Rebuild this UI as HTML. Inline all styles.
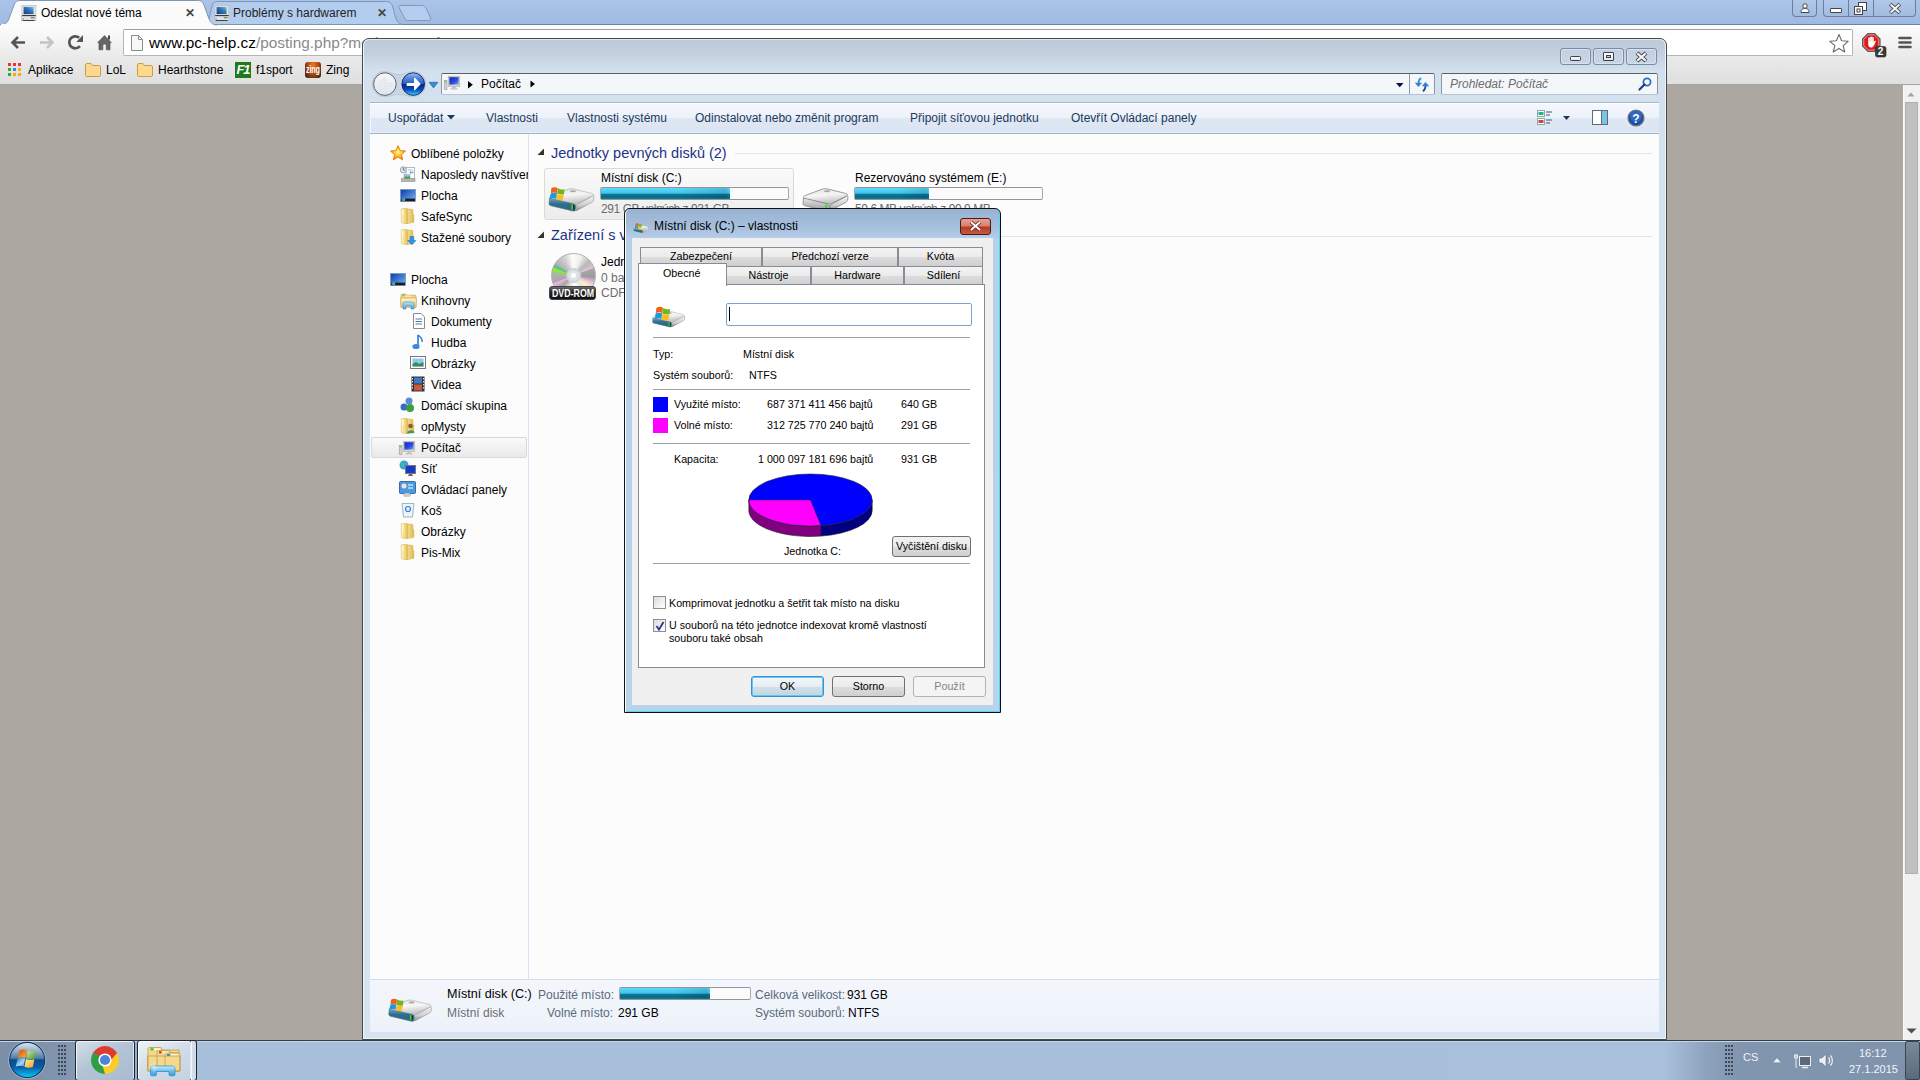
<!DOCTYPE html>
<html><head><meta charset="utf-8">
<style>
*{box-sizing:border-box;margin:0;padding:0}
html,body{width:1920px;height:1080px;overflow:hidden;background:#aca8a1;font-family:"Liberation Sans",sans-serif;font-size:12px;color:#000}
.a{position:absolute}
.t{position:absolute;white-space:nowrap;line-height:1}
svg{position:absolute;overflow:visible}
/* chrome */
#tabstrip{left:0;top:0;width:1920px;height:25px;background:linear-gradient(#abc5e9,#9fb8e0)}
#toolbar{left:0;top:24px;width:1920px;height:60px;background:linear-gradient(#fdfdfd 0,#f5f5f5 14px,#e9e9e9 33px,#dfdfdf 59px);border-top:1px solid #6d83a7;box-shadow:inset 0 1px 0 #fff}
#page{left:0;top:84px;width:1903px;height:956px;background:#aca8a1;border-top:1px solid #a4a4a4}
#vscroll{left:1903px;top:84px;width:17px;height:956px;background:#f1f1f1;border-top:1px solid #a4a4a4;box-shadow:inset 1px 0 0 #fafafa}
.cbtn{background:linear-gradient(#b0c8ea,#a2bbdf);border:1px solid #6d7f99;border-top:none}
.bm{top:64px;font-size:12px;color:#000}
/* explorer */
#exw{left:362px;top:38px;width:1305px;height:1002px;border:1px solid #484848;box-shadow:inset 1px 0 0 #eef4fb,inset -1px 0 0 #eef4fb,inset 0 1px 0 #e4eaf4,inset 0 -1px 0 #eef4fb;border-radius:7px 7px 0 0;background:linear-gradient(#bccad9 0,#c2cfdd 14px,#d3e0ee 32px,#d6e3f1 100%)}
.ctl{top:48px;width:31px;height:17px;border:1px solid #7b8ba4;border-radius:3px;background:linear-gradient(#c2d0e0,#c8d5e4);box-shadow:inset 0 0 0 1px #d8e2ee}
#cmd{left:370px;top:102px;width:1289px;height:32px;background:linear-gradient(#f5f8fd 0,#ecf2fa 48%,#dee7f3 52%,#dbe5f3 100%);border-top:1px solid #a7b8cd;border-bottom:1px solid #a0b1c8;box-shadow:inset 0 1px 0 #fdfeff,inset 1px 0 0 #f2f7fc,inset 0 -1px 0 #e8eff8}
#nav{left:370px;top:134px;width:159px;height:845px;background:#fcfcfc;border-right:1px solid #d8e4f3}
#content{left:529px;top:134px;width:1130px;height:845px;background:#fcfcfc}
#details{left:370px;top:979px;width:1289px;height:53px;background:linear-gradient(#f3f6fc,#edf2fa);border-top:1px solid #d3dde9}
.nv{font-size:12px;color:#000}
.grp{font-size:14.5px;color:#1e3287}
.gray{color:#6d6d6d}
.bar{border:1px solid #959595;border-left-color:#a8a8a8;border-right-color:#a8a8a8;background:#fbfbfb;border-radius:2px}
.fill{background:linear-gradient(90deg,rgba(0,0,0,0) 60%,rgba(0,20,40,0.15) 97%,rgba(0,0,0,0) 100%),linear-gradient(#5cdafa 0,#48c6ec 40%,#36aed8 50%,#0b7a96 54%,#086a88 85%,#0a88a8 100%)}
/* dialog */
#dlg{left:624px;top:208px;width:377px;height:505px;border:1px solid #111;box-shadow:inset 1px 0 0 #fff,inset -1px -1px 0 #4fd8fd;border-radius:6px 6px 0 0;background:linear-gradient(#98b2d2 0,#a8c1de 20px,#b7cfe9 30px,#bad2ea 100%)}
.d{font-size:10.7px}
.tab{height:19px;border:1px solid #898c95;border-bottom:none;background:linear-gradient(#f3f3f3 0,#ebebeb 50%,#dddddd 51%,#cfcfcf 100%);text-align:center;font-size:10.7px;line-height:17px}
.btn{border:1px solid #707070;border-radius:3px;background:linear-gradient(#f2f2f2 0,#ebebeb 50%,#dddddd 51%,#cfcfcf 100%);text-align:center;font-size:10.7px;line-height:18px}
.sep{height:1px;background:#a0a0a0;left:653px;width:317px}
/* taskbar */
#task{left:0;top:1040px;width:1920px;height:40px;box-shadow:inset 0 1px 0 #c6d6ea;background:linear-gradient(90deg,#7b8fa9 0,#8094ae 60px,#9cb3cf 150px,#a7bfdb 200px,#a8c0db 1665px,#8ea3bd 1705px,#8195af 1740px,#7f93ad 100%);border-top:1px solid #343e4a}
</style></head><body>
<svg width="0" height="0" style="position:absolute">
<defs>
 <linearGradient id="hdTop" x1="0" y1="0" x2="0.3" y2="1"><stop offset="0" stop-color="#dcdcdc"/><stop offset="0.5" stop-color="#f6f6f6"/><stop offset="1" stop-color="#c4c4c4"/></linearGradient>
 <linearGradient id="hdFront" x1="0" y1="0" x2="0" y2="1"><stop offset="0" stop-color="#7ea4bd"/><stop offset="0.45" stop-color="#2f6d92"/><stop offset="1" stop-color="#2a6a7a"/></linearGradient>
 <linearGradient id="hdRight" x1="0" y1="0" x2="0" y2="1"><stop offset="0" stop-color="#f4f4f4"/><stop offset="0.6" stop-color="#d0d0d0"/><stop offset="1" stop-color="#8c8c8c"/></linearGradient>
 <linearGradient id="hdFrontS" x1="0" y1="0" x2="0" y2="1"><stop offset="0" stop-color="#e6e6e6"/><stop offset="1" stop-color="#9a9a9a"/></linearGradient>
 <symbol id="hddwin" viewBox="0 0 56 40">
  <path d="M5,27 L5.5,22 L29,27.5 L32.5,28.5 L49.5,19.5 L49.8,23.5 C49.6,25 48.8,25.6 47.5,26.3 L33,34.6 C31.6,35.4 30.2,35.5 28.6,35.1 L7.5,30.2 C5.8,29.8 5,29 5,27 Z" fill="#6d7d86" opacity="0.55"/>
  <path d="M5.5,22 C5.2,20.8 6,20 7.8,19.3 L24,13.2 C26,12.5 28,12.5 30,13.1 L47.5,17.4 C49.6,17.9 50.2,19 48.6,20 L33.8,27.3 C32.2,28 30.6,28.1 29,27.7 L7.2,23 C6.3,22.8 5.7,22.6 5.5,22 Z" fill="url(#hdTop)" stroke="#a8a8a8" stroke-width="0.6"/>
  <path d="M5.5,22 L29,27.7 C31,28.2 32,29.2 32,31 L31.6,33.8 C31.3,35 30.4,35.3 28.8,35 L7.2,29.8 C5.7,29.4 5,28.8 5,27.3 Z" fill="url(#hdFront)" stroke="#5a7a8a" stroke-width="0.5"/>
  <path d="M32,29 L48.8,20.1 C49.7,19.7 50,20.2 49.9,21.2 L49.6,24.2 C49.4,25.2 48.7,25.8 47.7,26.4 L32.8,34.5 C32.2,34.8 31.7,34.6 31.8,33.9 L32.2,30.8 C32.3,29.9 32.1,29.3 32,29 Z" fill="url(#hdRight)" stroke="#9a9a9a" stroke-width="0.6"/>
  <ellipse cx="29" cy="15.3" rx="3" ry="1" fill="#8a8a8a" opacity="0.7"/>
  <rect x="27.4" y="28.5" width="1.8" height="5" fill="#33e01a"/><rect x="29.2" y="28.8" width="1" height="4.8" fill="#111"/>
  <path d="M7.3,12.3 C9,11 11.5,10.8 13.7,12 L13.1,17.2 C11,16.2 8.8,16.3 6.8,17.3 Z" fill="#f0621c"/>
  <path d="M14,12.2 C16.3,13.6 18.5,13.6 20.6,13.2 L19.9,18.3 C17.7,18.8 15.5,18.6 13.3,17.5 Z" fill="#73b51c"/>
  <path d="M6.6,17.7 C8.7,16.6 10.8,16.5 12.9,17.6 L12.2,23 C10.1,21.9 8,22 5.8,23.1 Z" fill="#1a9be0"/>
  <path d="M13.2,17.9 C15.4,19 17.6,19.2 19.8,18.7 L19,23.8 C16.8,24.6 14.5,24.5 12.4,23.3 Z" fill="#fbbe1a"/>
 </symbol>
 <symbol id="hddwin32" viewBox="0 0 56 40">
  <path d="M5,27 L5.5,22 L29,27.5 L32.5,28.5 L49.5,19.5 L49.8,23.5 C49.6,25 48.8,25.6 47.5,26.3 L33,34.6 C31.6,35.4 30.2,35.5 28.6,35.1 L7.5,30.2 C5.8,29.8 5,29 5,27 Z" fill="#6d7d86" opacity="0.55"/>
  <path d="M5.5,22 C5.2,20.8 6,20 7.8,19.3 L24,13.2 C26,12.5 28,12.5 30,13.1 L47.5,17.4 C49.6,17.9 50.2,19 48.6,20 L33.8,27.3 C32.2,28 30.6,28.1 29,27.7 L7.2,23 C6.3,22.8 5.7,22.6 5.5,22 Z" fill="url(#hdTop)" stroke="#a8a8a8" stroke-width="0.6"/>
  <path d="M5.5,22 L29,27.7 C31,28.2 32,29.2 32,31 L31.6,33.8 C31.3,35 30.4,35.3 28.8,35 L7.2,29.8 C5.7,29.4 5,28.8 5,27.3 Z" fill="url(#hdFront)" stroke="#5a7a8a" stroke-width="0.5"/>
  <path d="M32,29 L48.8,20.1 C49.7,19.7 50,20.2 49.9,21.2 L49.6,24.2 C49.4,25.2 48.7,25.8 47.7,26.4 L32.8,34.5 C32.2,34.8 31.7,34.6 31.8,33.9 L32.2,30.8 C32.3,29.9 32.1,29.3 32,29 Z" fill="url(#hdRight)" stroke="#9a9a9a" stroke-width="0.6"/>
  <ellipse cx="29" cy="15.3" rx="3" ry="1" fill="#8a8a8a" opacity="0.7"/>
  <rect x="27.4" y="28.5" width="1.8" height="5" fill="#33e01a"/><rect x="29.2" y="28.8" width="1" height="4.8" fill="#111"/>
   <g transform="translate(8.1,6.2) scale(1.45) translate(-5.8,-10.8)">
  <path d="M7.3,12.3 C9,11 11.5,10.8 13.7,12 L13.1,17.2 C11,16.2 8.8,16.3 6.8,17.3 Z" fill="#f0621c"/>
  <path d="M14,12.2 C16.3,13.6 18.5,13.6 20.6,13.2 L19.9,18.3 C17.7,18.8 15.5,18.6 13.3,17.5 Z" fill="#73b51c"/>
  <path d="M6.6,17.7 C8.7,16.6 10.8,16.5 12.9,17.6 L12.2,23 C10.1,21.9 8,22 5.8,23.1 Z" fill="#1a9be0"/>
  <path d="M13.2,17.9 C15.4,19 17.6,19.2 19.8,18.7 L19,23.8 C16.8,24.6 14.5,24.5 12.4,23.3 Z" fill="#fbbe1a"/>
  </g>
 </symbol>
<symbol id="fold" viewBox="0 0 16 16">
  <defs><linearGradient id="fdf" x1="0" y1="0" x2="1" y2="0"><stop offset="0" stop-color="#fff8c8"/><stop offset="0.5" stop-color="#f4dc8a"/><stop offset="1" stop-color="#e2bc52"/></linearGradient>
  <linearGradient id="fdb" x1="0" y1="0" x2="1" y2="0"><stop offset="0" stop-color="#f6e4a0"/><stop offset="1" stop-color="#e0b84a"/></linearGradient></defs>
  <path d="M6.5,1 L12,1.3 C12.6,1.3 12.9,1.7 12.9,2.3 L12.9,6.5 L13.8,7 L13.8,14.3 L7,15.6 Z" fill="url(#fdb)" stroke="#d0a848" stroke-width="0.5"/>
  <path d="M1.3,1.2 C1.3,0.7 1.7,0.4 2.2,0.4 L6.6,0.6 C7.3,0.6 7.6,1 7.6,1.6 L7.6,15 C7.6,15.6 7.2,15.8 6.6,15.7 L2.2,15 C1.7,14.9 1.3,14.6 1.3,14 Z" fill="url(#fdf)" stroke="#d4b050" stroke-width="0.5"/>
  <path d="M2.8,2 L2.8,7" stroke="#fff" stroke-width="1" opacity="0.9"/>
 </symbol>
 <symbol id="desk" viewBox="0 0 16 14">
  <defs><linearGradient id="dsk" x1="0" y1="0" x2="1" y2="1"><stop offset="0" stop-color="#0c3aa8"/><stop offset="1" stop-color="#78b8f4"/></linearGradient></defs>
  <rect x="0.5" y="0.5" width="15" height="12" fill="url(#dsk)" stroke="#7a94b8" stroke-width="0.8"/>
  <rect x="1" y="9.6" width="14" height="2.6" fill="#1c1c1c"/>
  <circle cx="3.4" cy="10.4" r="1.9" fill="#2a8ad8"/><rect x="2.4" y="9.3" width="1" height="1" fill="#f44"/><rect x="3.6" y="9.3" width="1" height="1" fill="#5c5"/><rect x="2.4" y="10.5" width="1" height="1" fill="#39f"/><rect x="3.6" y="10.5" width="1" height="1" fill="#fc3"/>
 </symbol>
 <symbol id="comp" viewBox="0 0 20 16">
  <rect x="1.2" y="5.6" width="2.8" height="9" fill="#d4d4d4" stroke="#8a8a8a" stroke-width="0.5"/>
  <rect x="1.8" y="6.3" width="1.6" height="1.2" fill="#3ad83a"/>
  <rect x="5.2" y="1.2" width="11.6" height="10.2" fill="#d8d4c8" stroke="#a8a49a" stroke-width="0.5"/>
  <rect x="6.4" y="2.2" width="9.2" height="7.4" fill="url(#scr)"/>
  <path d="M9.5,11.4 L12.5,11.4 L12.8,13 L9.2,13 Z" fill="#bbb"/><rect x="7.6" y="13" width="6.8" height="1.6" fill="#c8c8c8"/>
 </symbol>
 <linearGradient id="scr" x1="0" y1="0" x2="1" y2="1"><stop offset="0" stop-color="#1020c0"/><stop offset="0.6" stop-color="#2a50e0"/><stop offset="1" stop-color="#8aa8f0"/></linearGradient>

<symbol id="fav" viewBox="0 0 16 17">
  <defs><linearGradient id="favs" x1="0" y1="1" x2="1" y2="0"><stop offset="0" stop-color="#0a3c8c"/><stop offset="0.6" stop-color="#3a78b8"/><stop offset="1" stop-color="#6ad0ec"/></linearGradient></defs>
  <rect x="0.9" y="0.2" width="14" height="10.6" fill="#e4e4e4" stroke="#a8a8a8" stroke-width="0.5"/>
  <rect x="2.6" y="1.9" width="10" height="7.2" fill="url(#favs)"/>
  <rect x="1.2" y="10" width="13.4" height="0.9" fill="#2a2a2a"/>
  <rect x="0.3" y="11.4" width="14.6" height="4.4" fill="#e2e2e2" stroke="#b0b0b0" stroke-width="0.5"/>
  <rect x="9.8" y="12.2" width="3.8" height="1.1" fill="#6a6a6a"/>
  <rect x="1.8" y="15" width="11.8" height="0.9" fill="#333"/>
  <rect x="1.4" y="13.2" width="1.2" height="0.9" fill="#3cb89a"/><rect x="1.4" y="14.1" width="1.2" height="0.9" fill="#e88a4a"/>
 </symbol>
 <symbol id="hddplain" viewBox="0 0 56 40">
  <path d="M5.5,22 C5.2,20.8 6,20 7.8,19.3 L24,13.2 C26,12.5 28,12.5 30,13.1 L47.5,17.4 C49.6,17.9 50.2,19 48.6,20 L33.8,27.3 C32.2,28 30.6,28.1 29,27.7 L7.2,23 C6.3,22.8 5.7,22.6 5.5,22 Z" fill="url(#hdTop)" stroke="#858585" stroke-width="0.8"/>
  <path d="M5.5,22 L29,27.7 C31,28.2 32,29.2 32,31 L31.6,33.8 C31.3,35 30.4,35.3 28.8,35 L7.2,29.8 C5.7,29.4 5,28.8 5,27.3 Z" fill="url(#hdFrontS)" stroke="#858585" stroke-width="0.8"/>
  <path d="M32,29 L48.8,20.1 C49.7,19.7 50,20.2 49.9,21.2 L49.6,24.2 C49.4,25.2 48.7,25.8 47.7,26.4 L32.8,34.5 C32.2,34.8 31.7,34.6 31.8,33.9 L32.2,30.8 C32.3,29.9 32.1,29.3 32,29 Z" fill="url(#hdRight)" stroke="#858585" stroke-width="0.8"/>
  <ellipse cx="29" cy="15.3" rx="3" ry="1" fill="#8a8a8a" opacity="0.7"/>
  <rect x="27.4" y="28.5" width="1.8" height="5" fill="#33e01a"/>
 </symbol>
</defs></svg>
<!-- ============ CHROME ============ -->
<div id="tabstrip" class="a"></div>
<div id="toolbar" class="a"></div>
<!-- active tab -->
<svg style="left:0;top:0" width="440" height="26">
  <path d="M204,24.5 C207.5,23 208.5,21 209.5,17 L212,6 C213,2.5 214.5,1.5 218.5,1.5 L385.5,1.5 C389.5,1.5 391,2.5 392.5,6 L395.5,17 C396.5,21 398.5,23.5 402,24.5 Z" fill="#b3cdef" stroke="#7f95b5" stroke-width="1"/>
  <path d="M0.5,25 C6,25 8,22 10,16 L14,5 C15.5,1.5 17,0.5 21,0.5 L197,0.5 C201,0.5 202.5,1.5 204,5 L208,16 C210,22 212,25 217,25" fill="#fbfbfb" stroke="#7f95b5" stroke-width="1"/>
  <path d="M399.5,5.5 L422,5.5 C424,5.5 425,6.5 426,8 L430.5,18 C431,19.5 430.5,20.5 429,20.5 L408,20.5 C406,20.5 405,19.5 404.5,18 L399,7.5 C398.5,6.5 398.8,5.5 399.5,5.5 Z" fill="#b5cdee" stroke="#8298b7" stroke-width="1"/>
</svg>
<div class="a" style="left:1px;top:24px;width:208px;height:2px;background:#fbfbfb"></div>
<!-- favicons -->
<svg style="left:21px;top:5px" width="16" height="17"><use href="#fav"/></svg>
<div class="t" style="left:41px;top:7px;font-size:12px;color:#000">Odeslat nové téma</div>
<div class="t" style="left:185px;top:7px;font-size:12px;color:#444;font-weight:bold">✕</div>
<svg style="left:214px;top:5px" width="16" height="17"><use href="#fav"/></svg>
<div class="t" style="left:233px;top:7px;font-size:12px;color:#222">Problémy s hardwarem</div>
<div class="t" style="left:377px;top:7px;font-size:12px;color:#444;font-weight:bold">✕</div>
<!-- window controls -->
<div class="a cbtn" style="left:1792px;top:0;width:25px;height:17px;border-radius:0 0 4px 4px"></div>
<svg style="left:1800px;top:3px" width="10" height="10"><circle cx="5" cy="3" r="2.2" fill="#fff" stroke="#444"/><path d="M1,9.5 C1,6 3,5.5 5,5.5 C7,5.5 9,6 9,9.5 Z" fill="#fff" stroke="#444"/></svg>
<div class="a cbtn" style="left:1823px;top:0;width:93px;height:17px;border-radius:0 0 4px 4px"></div>
<div class="a" style="left:1848px;top:0;width:1px;height:16px;background:#6d7f99"></div>
<div class="a" style="left:1873px;top:0;width:1px;height:16px;background:#6d7f99"></div>
<div class="a" style="left:1830px;top:8px;width:12px;height:5px;background:#fff;border:1px solid #444;border-radius:1px"></div>
<svg style="left:1854px;top:2px" width="14" height="13"><rect x="4.5" y="0.5" width="8" height="8" fill="#fff" stroke="#444"/><rect x="0.5" y="4.5" width="8" height="8" fill="#fff" stroke="#444"/><rect x="3" y="7" width="3" height="3" fill="none" stroke="#444"/></svg>
<svg style="left:1889px;top:3px" width="12" height="11"><path d="M1.2,1.2 L10.8,9.8 M10.8,1.2 L1.2,9.8" stroke="#4a4a4a" stroke-width="3.8"/><path d="M1.6,1.6 L10.4,9.4 M10.4,1.6 L1.6,9.4" stroke="#f4f4f4" stroke-width="2"/></svg>
<!-- nav buttons -->
<svg style="left:10px;top:35px" width="120" height="16">
  <path d="M8,2 L2.5,7.5 L8,13 M2.5,7.5 L15,7.5" stroke="#555" stroke-width="2.6" fill="none"/>
  <path d="M37,2 L42.5,7.5 L37,13 M42.5,7.5 L30,7.5" stroke="#c4c4c4" stroke-width="2.6" fill="none"/>
  <path d="M69.16,2.7 A6,6 0 1 0 69.9,11.16" stroke="#555" stroke-width="2.7" fill="none"/>
  <path d="M66.3,6.9 L73,0 L73,6.9 Z" fill="#555"/>
  <path d="M87.7,7.6 L94.5,0.6 L101.3,7.6 L100,7.6 L100,14.8 L96.3,14.8 L96.3,10.5 C96.3,8.6 92.8,8.6 92.8,10.5 L92.8,14.8 L89,14.8 L89,7.6 Z" fill="#666" stroke="#444" stroke-width="0.6"/>
  <rect x="98" y="0.5" width="2" height="4" fill="#444"/>
</svg>
<!-- omnibox -->
<div class="a" style="left:123px;top:29px;width:1730px;height:27px;background:#fff;border:1px solid #b5b5b5;border-radius:2px;border-top-color:#a0a0a0"></div>
<svg style="left:131px;top:35px" width="12" height="16"><path d="M0.5,0.5 L7.5,0.5 L11.5,4.5 L11.5,15.5 L0.5,15.5 Z" fill="#f8f8f8" stroke="#8c8c8c"/><path d="M7.5,0.5 L7.5,4.5 L11.5,4.5" fill="none" stroke="#8c8c8c"/></svg>
<div class="t" style="left:149px;top:35px;font-size:15.4px;color:#000">www.pc-help.cz<span style="color:#8a8a8a">/posting.php?mode=post&amp;f=27</span></div>
<svg style="left:1828px;top:33px" width="22" height="20"><path d="M11,1.5 L13.6,7.8 L20.2,8.3 L15.2,12.6 L16.8,19 L11,15.5 L5.2,19 L6.8,12.6 L1.8,8.3 L8.4,7.8 Z" fill="#fff" stroke="#6b6b6b" stroke-width="1.1" stroke-linejoin="round"/></svg>
<svg style="left:1862px;top:32.5px" width="26" height="25">
  <path d="M6,0.6 L12.6,0.6 L18,6 L18,12.9 L12.6,18.4 L6,18.4 L0.6,12.9 L0.6,6 Z" fill="#e01818" stroke="#5a5a5a" stroke-width="1.2"/>
  <path d="M6.4,1.8 L12.2,1.8 L16.8,6.4 L16.8,12.5 L12.2,17.2 L6.4,17.2 L1.8,12.5 L1.8,6.4 Z" fill="none" stroke="#fff" stroke-width="0.7" opacity="0.8"/>
  <path d="M6.2,11 L6.2,5.2 C6.2,4.4 7.6,4.4 7.6,5.2 L7.6,4.3 C7.6,3.5 9,3.5 9,4.3 L9,4 C9,3.2 10.4,3.2 10.4,4 L10.4,4.6 C10.4,3.8 11.8,3.8 11.8,4.6 L11.8,9.2 L12.6,8 C13.1,7.3 14.2,7.7 13.8,8.5 L12.2,12 C11.5,13.6 10.4,14.6 8.8,14.6 C7.2,14.6 6.2,13.4 6.2,11 Z" fill="#fff"/>
  <path d="M7.6,5.2 L7.6,8.6 M9,4.3 L9,8.4 M10.4,4.6 L10.4,8.6" stroke="#d8b0b0" stroke-width="0.5"/>
  <rect x="13.5" y="13.5" width="10.5" height="10.5" rx="1.8" fill="#3a3a3a" stroke="#222" stroke-width="0.6"/>
  <text x="15.8" y="22.2" font-family="Liberation Sans" font-weight="bold" font-size="10" fill="#fff">2</text>
</svg>
<svg style="left:1898px;top:36px" width="14" height="14"><path d="M1.5,2 L12.5,2 M1.5,6.5 L12.5,6.5 M1.5,11 L12.5,11" stroke="#555" stroke-width="2.6" stroke-linecap="round"/></svg>
<!-- bookmarks -->
<svg style="left:8px;top:63px" width="14" height="14"><g><rect x="0" y="0" width="3" height="3" fill="#e33"/><rect x="5" y="0" width="3" height="3" fill="#e33"/><rect x="10" y="0" width="3" height="3" fill="#e33"/><rect x="0" y="5" width="3" height="3" fill="#3a3"/><rect x="5" y="5" width="3" height="3" fill="#38e"/><rect x="10" y="5" width="3" height="3" fill="#fa0"/><rect x="0" y="10" width="3" height="3" fill="#3a3"/><rect x="5" y="10" width="3" height="3" fill="#fa0"/><rect x="10" y="10" width="3" height="3" fill="#fa0"/></g></svg>
<div class="t bm" style="left:28px">Aplikace</div>
<svg style="left:85px;top:63px" width="16" height="14"><path d="M0.5,2 C0.5,1 1,0.5 2,0.5 L6,0.5 L7.5,2.5 L14,2.5 C15,2.5 15.5,3 15.5,4 L15.5,12.5 C15.5,13 15,13.5 14.5,13.5 L1.5,13.5 C1,13.5 0.5,13 0.5,12.5 Z" fill="#fcd98c" stroke="#c89b45"/></svg>
<div class="t bm" style="left:106px">LoL</div>
<svg style="left:137px;top:63px" width="16" height="14"><path d="M0.5,2 C0.5,1 1,0.5 2,0.5 L6,0.5 L7.5,2.5 L14,2.5 C15,2.5 15.5,3 15.5,4 L15.5,12.5 C15.5,13 15,13.5 14.5,13.5 L1.5,13.5 C1,13.5 0.5,13 0.5,12.5 Z" fill="#fcd98c" stroke="#c89b45"/></svg>
<div class="t bm" style="left:158px">Hearthstone</div>
<div class="a" style="left:235px;top:62px;width:16px;height:16px;background:#1d7a1d;color:#fff;font-weight:bold;font-style:italic;font-size:13px;line-height:16px;text-align:center;letter-spacing:-1px">F1</div>
<div class="t bm" style="left:256px">f1sport</div>
<div class="a" style="left:305px;top:62px;width:16px;height:16px;background:radial-gradient(ellipse at 50% 20%,#f07a1a 0,#b0501a 45%,#2a1408 100%);border-radius:3px;overflow:hidden"><div class="t" style="left:0.5px;top:3px;font-size:10px;font-weight:bold;color:#fff;transform:scaleX(0.72);transform-origin:0 0;letter-spacing:-0.2px">zing</div></div>
<div class="t bm" style="left:326px">Zing</div>
<!-- page -->
<div id="page" class="a"></div>
<div id="vscroll" class="a"></div>
<svg style="left:1906.5px;top:91.5px" width="11" height="6"><path d="M0.5,4.5 L4,0.5 L7.5,4.5 Z" fill="#a3a3a3"/></svg>
<div class="a" style="left:1905px;top:102px;width:13px;height:772px;background:#c0c0c0;border:1px solid #b0b0b0"></div>
<svg style="left:1906px;top:1028px" width="11" height="6"><path d="M0.5,0.5 L5.5,5.5 L10.5,0.5 Z" fill="#505050"/></svg>

<!-- ============ EXPLORER ============ -->
<div id="exw" class="a"></div>
<div class="a ctl" style="left:1560px"></div>
<div class="a ctl" style="left:1593px"></div>
<div class="a ctl" style="left:1626px"></div>
<div class="a" style="left:1570px;top:56px;width:11px;height:5px;background:linear-gradient(#fff,#e0e0e0);border:1px solid #3a3f4a;border-radius:1.5px"></div>
<div class="a" style="left:1603px;top:52px;width:11px;height:9px;background:linear-gradient(#fff,#e4e4e4);border:1px solid #3a3f4a;border-radius:1px"></div>
<div class="a" style="left:1606px;top:55px;width:5px;height:3px;border:1px solid #3a3f4a;background:#c8d5e4"></div>
<svg style="left:1635px;top:52px" width="13" height="10"><path d="M2,1 L11,9 M11,1 L2,9" stroke="#3a3f4a" stroke-width="4"/><path d="M2.3,1.3 L10.7,8.7 M10.7,1.3 L2.3,8.7" stroke="#f4f4f4" stroke-width="2.2"/></svg>
<!-- back/forward -->
<svg style="left:370px;top:70px" width="72" height="30">
  <defs><linearGradient id="fg" x1="0" y1="0" x2="0" y2="1"><stop offset="0" stop-color="#a6c4f0"/><stop offset="0.2" stop-color="#5a8ee0"/><stop offset="0.48" stop-color="#2a5cc8"/><stop offset="0.5" stop-color="#06228a"/><stop offset="0.75" stop-color="#0a4cc0"/><stop offset="1" stop-color="#3ad8ff"/></linearGradient>
  <linearGradient id="bg1" x1="0" y1="0" x2="0" y2="1"><stop offset="0" stop-color="#f6f8fb"/><stop offset="1" stop-color="#dde4ec"/></linearGradient></defs>
  <path d="M14.9,1.6 C20,1.6 23,4.6 29,4.6 C35,4.6 38,1.6 43.2,1.6 C50.2,1.6 55.7,7.1 55.7,14.1 C55.7,21.1 50.2,26.6 43.2,26.6 C38,26.6 35,24.4 29,24.4 C23,24.4 20,26.6 14.9,26.6 C7.9,26.6 2.4,21.1 2.4,14.1 C2.4,7.1 7.9,1.6 14.9,1.6 Z" fill="#c9d3de" stroke="#b4bec9" stroke-width="0.8" opacity="0.8"/>
  <circle cx="14.9" cy="14.1" r="11.3" fill="url(#bg1)" stroke="#5c636c" stroke-width="1"/>
  <path d="M21.5,12.9 L15,12.9 L15,8.5 C15,7.8 14.4,7.6 13.8,8.1 L8.3,14.1 L13.8,20.1 C14.4,20.6 15,20.4 15,19.7 L15,16.1 L21.5,16.1 C22.4,16.1 22.4,12.9 21.5,12.9 Z" fill="#e6ebf0" stroke="#d6dde5" stroke-width="0.5"/>
  <circle cx="43.2" cy="14.1" r="11.3" fill="url(#fg)" stroke="#12306a" stroke-width="1"/>
  <path d="M37.3,12.9 L44,12.9 L44,8.5 C44,7.8 44.6,7.6 45.2,8.1 L50.8,14.1 L45.2,20.1 C44.6,20.6 44,20.4 44,19.7 L44,16.1 L37.3,16.1 C36.4,16.1 36.4,12.9 37.3,12.9 Z" fill="#fff"/>
  <path d="M59,12.3 L68,12.3 L63.5,17.9 Z" fill="#3a8ad8" stroke="#1e5aa0" stroke-width="0.6"/>
</svg>
<!-- address bar -->
<div class="a" style="left:441px;top:73px;width:994px;height:22px;background:#f4f7fa;border:1px solid #5b5f66;border-radius:2px;border-bottom-color:#b8c3d0;border-left-color:#8c96a3;border-right-color:#8c96a3"></div>
<div class="a" style="left:1409px;top:74px;width:1px;height:20px;background:#8f9bab"></div>
<svg style="left:443px;top:75px" width="20" height="16"><use href="#comp"/></svg>
<svg style="left:467.5px;top:80.8px" width="6" height="8"><path d="M0,0 L4.8,3.7 L0,7.4 Z" fill="#000"/></svg>
<div class="t nv" style="left:481px;top:78px">Počítač</div>
<svg style="left:530px;top:80px" width="6" height="8"><path d="M0.5,0.5 L5,4 L0.5,7.5 Z" fill="#000"/></svg>
<svg style="left:1396px;top:83px" width="8" height="5"><path d="M0,0 L7.5,0 L3.75,4.3 Z" fill="#0c0c4a"/></svg>
<svg style="left:1410px;top:76px" width="24" height="18">
  <path d="M8.4,8.5 C8.4,5.5 9,3.3 11.2,2.2" stroke="#2a9ad8" stroke-width="1.9" fill="none"/>
  <path d="M4.8,6.8 L12.2,6.8 L8.4,11 Z" fill="#3a84cc"/>
  <path d="M15.5,9 C15.5,12 15,14 12.8,15.2" stroke="#1e4e9a" stroke-width="1.9" fill="none"/>
  <path d="M11.8,10.2 L19.2,10.2 L15.5,6 Z" fill="#3a7cc8"/>
</svg>
<!-- search box -->
<div class="a" style="left:1441px;top:73px;width:217px;height:22px;background:#f4f7fa;border:1px solid #5b5f66;border-radius:2px;border-bottom-color:#b8c3d0;border-left-color:#8c96a3;border-right-color:#8c96a3"></div>
<div class="t nv" style="left:1450px;top:78px;font-style:italic;color:#6d6d6d">Prohledat: Počítač</div>
<svg style="left:1638px;top:77px" width="14" height="14"><circle cx="9" cy="5" r="3.6" fill="none" stroke="#2a70c0" stroke-width="1.8"/><path d="M6.5,7.5 L1.5,12.5" stroke="#173f80" stroke-width="2.2" stroke-linecap="round"/></svg>
<!-- command bar -->
<div id="cmd" class="a"></div>
<div class="t nv" style="left:388px;top:112px;color:#1e395b">Uspořádat</div>
<svg style="left:447px;top:115px" width="8" height="5"><path d="M0,0 L8,0 L4,4.5 Z" fill="#1e395b"/></svg>
<div class="t nv" style="left:486px;top:112px;color:#1e395b">Vlastnosti</div>
<div class="t nv" style="left:567px;top:112px;color:#1e395b">Vlastnosti systému</div>
<div class="t nv" style="left:695px;top:112px;color:#1e395b">Odinstalovat nebo změnit program</div>
<div class="t nv" style="left:910px;top:112px;color:#1e395b">Připojit síťovou jednotku</div>
<div class="t nv" style="left:1071px;top:112px;color:#1e395b">Otevřít Ovládací panely</div>
<svg style="left:1536px;top:109px" width="38" height="18"><rect x="1.5" y="1.5" width="7" height="6" fill="#fff" stroke="#8aa"/><rect x="2.5" y="3" width="5" height="3" fill="#3a8"/><rect x="1.5" y="9.5" width="7" height="6" fill="#fff" stroke="#8aa"/><rect x="2.5" y="11" width="5" height="3" fill="#c44"/><path d="M10,3 L16,3 M10,6 L14,6 M10,11 L16,11 M10,14 L14,14" stroke="#456" stroke-width="1"/><path d="M27,7 L34,7 L30.5,11 Z" fill="#1e395b"/></svg>
<svg style="left:1591px;top:109px" width="18" height="17"><rect x="1.5" y="1.5" width="15" height="14" fill="#fff" stroke="#5a6b80"/><rect x="10" y="2" width="6" height="13" fill="#7ec3e0"/><path d="M10.5,1.5 L10.5,15.5" stroke="#5a6b80"/></svg>
<svg style="left:1627px;top:109px" width="18" height="18"><circle cx="9" cy="9" r="8" fill="#1d4fa8" stroke="#7a7a7a" stroke-width="1.2"/><circle cx="9" cy="7" r="6" fill="#3b77d0" opacity="0.6"/><text x="5.2" y="13.5" font-family="Liberation Sans" font-weight="bold" font-size="12" fill="#fff">?</text></svg>
<!-- nav pane -->
<div id="nav" class="a"></div>
<div id="content" class="a"></div>
<div class="a" style="left:371px;top:437px;width:156px;height:21px;border:1px solid #d9d9d9;border-radius:2px;background:linear-gradient(#fafafa,#e9e9e9)"></div>
<svg style="left:390px;top:145px" width="16" height="16"><defs><radialGradient id="stg" cx="50%" cy="45%" r="55%"><stop offset="0" stop-color="#fff6a0"/><stop offset="0.5" stop-color="#fcc420"/><stop offset="1" stop-color="#f08010"/></radialGradient></defs><path d="M8,0.6 L10.2,5.6 L15.5,6 L11.5,9.6 L12.7,14.9 L8,12.1 L3.3,14.9 L4.5,9.6 L0.5,6 L5.8,5.6 Z" fill="url(#stg)" stroke="#e67818" stroke-width="0.9" stroke-linejoin="round"/></svg>
<div class="t nv" style="left:411px;top:148px">Oblíbené položky</div>
<svg style="left:400px;top:166px" width="16" height="16"><rect x="6" y="1.5" width="8.5" height="11" fill="#fff" stroke="#9a9a9a" stroke-width="0.7"/><path d="M8,4 L13,4" stroke="#b8c0c8"/><circle cx="10.6" cy="6.4" r="0.9" fill="#2a70e0"/><circle cx="12.6" cy="6.4" r="0.9" fill="#3ab0f0"/><circle cx="3.3" cy="3.8" r="3" fill="#e2eaee" stroke="#8a8a8a" stroke-width="0.8"/><path d="M3.3,1.8 L3.3,4 L4.8,4" stroke="#3a4a6a" stroke-width="0.8" fill="none"/><rect x="4" y="8.6" width="6" height="4" fill="#8ac8ec" stroke="#9a9a9a" stroke-width="0.5"/><path d="M4.3,11.2 L6,10.2 L7.5,11 L9.8,10 L9.8,12.4 L4.3,12.4 Z" fill="#3a9a3a"/><rect x="1.5" y="12.6" width="13.5" height="3" fill="#b4b4b4" stroke="#8a8a8a" stroke-width="0.5"/></svg>
<div class="a nv" style="left:421px;top:169px;width:107px;overflow:hidden;white-space:nowrap;line-height:1">Naposledy navštívené</div>
<svg style="left:400px;top:189px" width="16" height="14"><use href="#desk"/></svg>
<div class="t nv" style="left:421px;top:190px">Plocha</div>
<svg style="left:400px;top:208px" width="16" height="16"><use href="#fold"/></svg>
<div class="t nv" style="left:421px;top:211px">SafeSync</div>
<svg style="left:400px;top:229px" width="17" height="17"><use href="#fold" width="16" height="16"/><path d="M10,7.5 L10,11.5 L7.6,11.5 L11.8,15.8 L16,11.5 L13.6,11.5 L13.6,7.5 Z" fill="#2a9ae8" stroke="#1a6ab8" stroke-width="0.5"/></svg>
<div class="t nv" style="left:421px;top:232px">Stažené soubory</div>
<svg style="left:390px;top:273px" width="16" height="14"><use href="#desk"/></svg>
<div class="t nv" style="left:411px;top:274px">Plocha</div>
<svg style="left:400px;top:293px" width="17" height="17"><defs><linearGradient id="kf" x1="0" y1="0" x2="0" y2="1"><stop offset="0" stop-color="#fff6c8"/><stop offset="1" stop-color="#eec866"/></linearGradient><linearGradient id="ka" x1="0" y1="0" x2="0" y2="1"><stop offset="0" stop-color="#b8e6fa"/><stop offset="1" stop-color="#4aa4de"/></linearGradient></defs><path d="M1,14 L1,2.2 C1,1.6 1.4,1.2 2,1.2 L6,1.2 L7,2.2 L15,2.2 C15.6,2.2 16,2.6 16,3.2 L16,14 Z" fill="#f0d488" stroke="#c49a48" stroke-width="0.6"/><rect x="2.4" y="1.6" width="2.4" height="1.1" fill="#3cc83c"/><rect x="5.2" y="2.7" width="6" height="0.8" fill="#fff"/><path d="M0.6,5 L16.4,5 L16,14.2 L1,14.2 Z" fill="url(#kf)" stroke="#c49a48" stroke-width="0.6"/><path d="M3,16 L3,10.6 C3,9.7 3.7,9 4.6,9 L12.4,9 C13.3,9 14,9.7 14,10.6 L14,16 L11,16 L11,12.6 L6,12.6 L6,16 Z" fill="url(#ka)" stroke="#3a8ccc" stroke-width="0.6"/></svg>
<div class="t nv" style="left:421px;top:295px">Knihovny</div>
<svg style="left:412px;top:313px" width="14" height="16"><path d="M1.5,0.5 L9,0.5 L12.5,4 L12.5,15.5 L1.5,15.5 Z" fill="#fff" stroke="#8a8a8a"/><path d="M3.5,6 L10,6 M3.5,8.5 L10,8.5 M3.5,11 L10,11" stroke="#4a7ab0"/></svg>
<div class="t nv" style="left:431px;top:316px">Dokumenty</div>
<svg style="left:411px;top:334px" width="16" height="16"><path d="M7,1 L7,12" stroke="#2a7ad0" stroke-width="1.6"/><ellipse cx="5" cy="12.5" rx="3.6" ry="2.6" fill="#3a8ae0"/><path d="M7,1 C9,3 12,4 11,8" stroke="#2a7ad0" stroke-width="1.4" fill="none"/></svg>
<div class="t nv" style="left:431px;top:337px">Hudba</div>
<svg style="left:410px;top:356px" width="16" height="14"><rect x="0.5" y="0.5" width="15" height="12" fill="#fff" stroke="#777"/><rect x="2.5" y="2.5" width="11" height="8" fill="#8cc8e8"/><path d="M2.5,8 L6,6 L9,8 L13.5,6 L13.5,10.5 L2.5,10.5 Z" fill="#3a8a5a"/></svg>
<div class="t nv" style="left:431px;top:358px">Obrázky</div>
<svg style="left:411px;top:376px" width="14" height="16"><rect x="0.5" y="0.5" width="13" height="15" fill="#333"/><rect x="3" y="1.5" width="8" height="6" fill="#3a7ac8"/><rect x="3" y="8.5" width="8" height="6" fill="#c85a3a"/><path d="M1.5,2 L1.5,14 M12.5,2 L12.5,14" stroke="#ddd" stroke-dasharray="1.5,1.5"/></svg>
<div class="t nv" style="left:431px;top:379px">Videa</div>
<svg style="left:399px;top:397px" width="17" height="16"><circle cx="5" cy="10" r="3.5" fill="#3a6ac8"/><circle cx="10" cy="4" r="3.5" fill="#5a8ad8"/><circle cx="11" cy="11" r="4" fill="#3aa03a"/></svg>
<div class="t nv" style="left:421px;top:400px">Domácí skupina</div>
<svg style="left:400px;top:418px" width="16" height="16"><use href="#fold"/><circle cx="10.5" cy="8" r="2.3" fill="#8a5a3a"/><path d="M7,15.5 C7,11.5 14.5,11 14.5,15 Z" fill="#3a9a6a"/></svg>
<div class="t nv" style="left:421px;top:421px">opMysty</div>
<svg style="left:398px;top:440px" width="20" height="16"><use href="#comp"/></svg>
<div class="t nv" style="left:421px;top:442px">Počítač</div>
<svg style="left:399px;top:460px" width="18" height="16"><circle cx="5" cy="5" r="4.5" fill="#3aa0e0"/><path d="M2,3 C4,2 6,5 4,7" fill="#5c5"/><rect x="6.5" y="5.5" width="10" height="8" fill="#1738c8" stroke="#777"/><path d="M10,14 L13,14 L14,16 L9,16 Z" fill="#666"/></svg>
<div class="t nv" style="left:421px;top:463px">Síť</div>
<svg style="left:399px;top:481px" width="17" height="16"><rect x="0.5" y="0.5" width="16" height="12" rx="1" fill="#4a9ae0" stroke="#3a6aa8"/><circle cx="5" cy="5" r="2.5" fill="#fdd"/><path d="M9,4 L14,4 M9,7 L14,7" stroke="#fff"/><ellipse cx="8" cy="14" rx="4" ry="2" fill="#ccc"/></svg>
<div class="t nv" style="left:421px;top:484px">Ovládací panely</div>
<svg style="left:401px;top:502px" width="14" height="16"><path d="M1,1.5 L13,1.5 L11.5,15 L2.5,15 Z" fill="#eaf4fb" stroke="#8aa" stroke-width="0.8"/><circle cx="7" cy="7" r="2.5" fill="none" stroke="#3a7ad8" stroke-width="1.2"/></svg>
<div class="t nv" style="left:421px;top:505px">Koš</div>
<svg style="left:400px;top:523px" width="16" height="16"><use href="#fold"/></svg>
<div class="t nv" style="left:421px;top:526px">Obrázky</div>
<svg style="left:400px;top:544px" width="16" height="16"><use href="#fold"/></svg>
<div class="t nv" style="left:421px;top:547px">Pis-Mix</div>

<!-- content -->
<svg style="left:537px;top:148px" width="8" height="8"><path d="M7,0.5 L7,7 L0.5,7 Z" fill="#333"/></svg>
<div class="t grp" style="left:551px;top:145.5px">Jednotky pevných disků (2)</div>
<div class="a" style="left:735px;top:153px;width:917px;height:1px;background:#e2e6ec"></div>
<div class="a" style="left:544px;top:168px;width:250px;height:52px;border:1px solid #dadada;border-radius:3px;background:linear-gradient(#fafafa,#ececec)"></div>
<svg style="left:544px;top:176px" width="56" height="40"><use href="#hddwin"/></svg>
<div class="t nv" style="left:601px;top:172px">Místní disk (C:)</div>
<div class="a bar" style="left:600px;top:187px;width:189px;height:13px"></div>
<div class="a fill" style="left:601px;top:188px;width:129px;height:11px"></div>
<div class="t nv gray" style="left:601px;top:203px;letter-spacing:-0.43px">291 GB volných z 931 GB</div>
<svg style="left:798px;top:176px" width="56" height="40"><use href="#hddplain"/></svg>
<div class="t nv" style="left:855px;top:172px">Rezervováno systémem (E:)</div>
<div class="a bar" style="left:854px;top:187px;width:189px;height:13px"></div>
<div class="a fill" style="left:855px;top:188px;width:74px;height:11px"></div>
<div class="t nv gray" style="left:855px;top:203px;letter-spacing:-0.43px">59,6 MB volných z 99,9 MB</div>
<svg style="left:537px;top:231px" width="8" height="8"><path d="M7,0.5 L7,7 L0.5,7 Z" fill="#333"/></svg>
<div class="t grp" style="left:551px;top:228px">Zařízení s vyměnitelným úložištěm (1)</div>
<div class="a" style="left:800px;top:236px;width:852px;height:1px;background:#e2e6ec"></div>
<div class="a" style="left:550.5px;top:252.8px;width:45.4px;height:45.4px;border-radius:50%;border:1px solid #b0b0b0;background:conic-gradient(from 0deg,#fbfbfb 0deg,#f0f0f0 22deg,#b8b8b8 48deg,#c4c4c4 62deg,#f4c4ec 66deg,#a6a6a6 72deg,#9c9c9c 95deg,#f0c0e8 112deg,#f6f2b4 126deg,#e4e4e4 142deg,#ffffff 172deg,#e6e6e6 198deg,#a4a4a4 228deg,#f0b4e2 246deg,#a8a8a8 252deg,#b0b0b0 274deg,#8cf018 288deg,#50b8b0 297deg,#b4b4b4 305deg,#cccccc 330deg,#fbfbfb 356deg)"></div>
<div class="a" style="left:565.5px;top:268px;width:15px;height:15px;border-radius:50%;background:#dfe2e4;border:2px solid #cfd3d6"></div>
<div class="a" style="left:570.5px;top:273px;width:5px;height:5px;border-radius:50%;background:#fff"></div>
<div class="a" style="left:549px;top:286px;width:47px;height:14px;border-radius:3px;background:linear-gradient(#6a6a6a,#222 45%,#111 100%);border:1px solid #444"></div>
<div class="t" style="left:552px;top:288px;font-size:10.5px;font-weight:bold;color:#fff;transform:scaleX(0.84);transform-origin:0 0">DVD-ROM</div>
<div class="t nv" style="left:601px;top:256px">Jednotka DVD (D:)</div>
<div class="t nv gray" style="left:601px;top:272px">0 bajtů volných z 3,94 GB</div>
<div class="t nv gray" style="left:601px;top:287px">CDFS</div>
<!-- details pane -->
<div id="details" class="a"></div>
<svg style="left:383.5px;top:988.3px" width="53.2" height="38" viewBox="0 0 56 40"><use href="#hddwin"/></svg>
<div class="t" style="left:447px;top:988px;font-size:12.6px">Místní disk (C:)</div>
<div class="t gray" style="left:447px;top:1007px">Místní disk</div>
<div class="t gray" style="left:538px;top:989px;color:#5a6a7a">Použité místo:</div>
<div class="a bar" style="left:619px;top:987px;width:132px;height:13px"></div>
<div class="a fill" style="left:620px;top:988px;width:90px;height:11px"></div>
<div class="t" style="left:547px;top:1007px;color:#5a6a7a">Volné místo:</div>
<div class="t" style="left:618px;top:1007px">291 GB</div>
<div class="t" style="left:755px;top:989px;color:#5a6a7a">Celková velikost:</div>
<div class="t" style="left:847px;top:989px">931 GB</div>
<div class="t" style="left:755px;top:1007px;color:#5a6a7a">Systém souborů:</div>
<div class="t" style="left:848px;top:1007px">NTFS</div>

<!-- ============ DIALOG ============ -->
<div id="dlg" class="a"></div>
<svg style="left:632.3px;top:221.3px" width="18.7" height="13.3" viewBox="0 0 56 40"><use href="#hddwin32"/></svg>
<div class="t" style="left:654px;top:220px;font-size:12px">Místní disk (C:) – vlastnosti</div>
<div class="a" style="left:960px;top:218px;width:31px;height:17px;border:1px solid #4a1a1a;border-radius:3px;background:linear-gradient(#e8a090 0,#d88070 45%,#b83a22 55%,#c85a40 100%)"></div>
<svg style="left:969px;top:221px" width="13" height="10"><path d="M2,1 L11,9 M11,1 L2,9" stroke="#5a2a2a" stroke-width="3.6"/><path d="M2,1 L11,9 M11,1 L2,9" stroke="#fff" stroke-width="1.8"/></svg>
<div class="a" style="left:632px;top:238px;width:361px;height:467px;background:#f0f0f0"></div>
<!-- tabs -->
<div class="a tab" style="left:640px;top:247px;width:122px">Zabezpečení</div>
<div class="a tab" style="left:762px;top:247px;width:136px">Předchozí verze</div>
<div class="a tab" style="left:898px;top:247px;width:85px">Kvóta</div>
<div class="a tab" style="left:726px;top:266px;width:85px">Nástroje</div>
<div class="a tab" style="left:811px;top:266px;width:93px">Hardware</div>
<div class="a tab" style="left:904px;top:266px;width:79px">Sdílení</div>
<div class="a" style="left:638px;top:284px;width:347px;height:384px;background:#fff;border:1px solid #898c95"></div>
<div class="a" style="left:638px;top:263px;width:89px;height:23px;background:#fff;border:1px solid #898c95;border-bottom:none"></div>
<div class="t d" style="left:663px;top:268px">Obecné</div>
<!-- panel content -->
<svg style="left:649px;top:301.5px" width="40" height="28.6" viewBox="0 0 56 40"><use href="#hddwin32"/></svg>
<div class="a" style="left:726px;top:303px;width:246px;height:23px;border:1px solid #7da2ce;border-radius:2px;background:#fff"></div>
<div class="a" style="left:729px;top:307px;width:1px;height:14px;background:#000"></div>
<div class="a sep" style="top:337px"></div>
<div class="t d" style="left:653px;top:349px">Typ:</div>
<div class="t d" style="left:743px;top:349px">Místní disk</div>
<div class="t d" style="left:653px;top:370px">Systém souborů:</div>
<div class="t d" style="left:749px;top:370px">NTFS</div>
<div class="a sep" style="top:389px"></div>
<div class="a" style="left:653px;top:397px;width:15px;height:15px;background:#0000ff"></div>
<div class="t d" style="left:674px;top:399px">Využité místo:</div>
<div class="t d" style="left:767px;top:399px">687 371 411 456 bajtů</div>
<div class="t d" style="left:901px;top:399px">640 GB</div>
<div class="a" style="left:653px;top:418px;width:15px;height:15px;background:#ff00ff"></div>
<div class="t d" style="left:674px;top:420px">Volné místo:</div>
<div class="t d" style="left:767px;top:420px">312 725 770 240 bajtů</div>
<div class="t d" style="left:901px;top:420px">291 GB</div>
<div class="a sep" style="top:443px"></div>
<div class="t d" style="left:674px;top:454px">Kapacita:</div>
<div class="t d" style="left:758px;top:454px">1 000 097 181 696 bajtů</div>
<div class="t d" style="left:901px;top:454px">931 GB</div>
<!-- pie -->
<svg style="left:740px;top:465px" width="140" height="80">
  <path d="M8.8,35 L8.8,45.5 A61.7,26 0 0 0 81,71.1 L81,60.6 A61.7,26 0 0 1 8.8,35 Z" fill="#800080" stroke="#202020" stroke-width="0.6"/>
  <path d="M81,60.6 L81,71.1 A61.7,26 0 0 0 132.2,45.5 L132.2,35 A61.7,26 0 0 1 81,60.6 Z" fill="#000080" stroke="#202020" stroke-width="0.6"/>
  <ellipse cx="70.5" cy="35" rx="61.7" ry="26" fill="#0000ff" stroke="#202020" stroke-width="0.6"/>
  <path d="M70.5,35 L8.8,35 A61.7,26 0 0 0 81,60.6 Z" fill="#ff00ff" stroke="#202020" stroke-width="0.5"/>
</svg>
<div class="t d" style="left:784px;top:546px">Jednotka C:</div>
<div class="a btn" style="left:892px;top:536px;width:79px;height:21px">Vyčištění disku</div>
<div class="a sep" style="top:563px"></div>
<div class="a" style="left:653px;top:596px;width:13px;height:13px;border:1px solid #8f8f8f;background:linear-gradient(135deg,#dcdcdc,#fff)"></div>
<div class="t d" style="left:669px;top:598px">Komprimovat jednotku a šetřit tak místo na disku</div>
<div class="a" style="left:653px;top:619px;width:13px;height:13px;border:1px solid #8f8f8f;background:linear-gradient(135deg,#dcdcdc,#fff)"></div>
<svg style="left:655px;top:621px" width="10" height="10"><path d="M1.5,5 L4,8.5 L8.5,1" stroke="#2a3a8a" stroke-width="1.8" fill="none"/></svg>
<div class="t d" style="left:669px;top:620px">U souborů na této jednotce indexovat kromě vlastností</div>
<div class="t d" style="left:669px;top:633px">souboru také obsah</div>
<!-- buttons -->
<div class="a btn" style="left:751px;top:676px;width:73px;height:21px;border-color:#3a8fcf;background:linear-gradient(#f2f6f9 0,#e6edf2 50%,#d2dfe8 51%,#c4d5e1 100%);box-shadow:inset 0 0 0 1px #58cdf6">OK</div>
<div class="a btn" style="left:832px;top:676px;width:73px;height:21px">Storno</div>
<div class="a btn" style="left:913px;top:676px;width:73px;height:21px;border-color:#adb2b5;background:#f4f4f4;color:#838383">Použít</div>

<!-- ============ TASKBAR ============ -->
<div id="task" class="a"></div>
<svg style="left:6px;top:1039px" width="44" height="41">
  <defs>
   <linearGradient id="orbg" x1="0" y1="0" x2="0" y2="1"><stop offset="0" stop-color="#dfe8f0"/><stop offset="0.22" stop-color="#9db4c8"/><stop offset="0.45" stop-color="#4f7da6"/><stop offset="0.5" stop-color="#0d4a8a"/><stop offset="0.7" stop-color="#0a5aa8"/><stop offset="1" stop-color="#06d0f8"/></linearGradient>
   <linearGradient id="fr" x1="0" y1="0" x2="1" y2="1"><stop offset="0" stop-color="#e2401a"/><stop offset="1" stop-color="#f8c020"/></linearGradient>
   <linearGradient id="fgn" x1="0" y1="0" x2="1" y2="1"><stop offset="0" stop-color="#d8e8a0"/><stop offset="1" stop-color="#3a9a2a"/></linearGradient>
   <linearGradient id="fb" x1="0" y1="0" x2="1" y2="1"><stop offset="0" stop-color="#1a7ad0"/><stop offset="0.6" stop-color="#a8d8f8"/><stop offset="1" stop-color="#1a8ae0"/></linearGradient>
   <linearGradient id="fy" x1="0" y1="0" x2="1" y2="1"><stop offset="0" stop-color="#fff0b0"/><stop offset="1" stop-color="#f8a010"/></linearGradient>
  </defs>
  <circle cx="21.2" cy="21" r="17.6" fill="url(#orbg)" stroke="#0c3868" stroke-width="1.1"/>
  <circle cx="21.2" cy="21" r="18.6" fill="none" stroke="#c8d4e0" stroke-width="0.8" opacity="0.6"/>
  <path d="M13.6,11.4 C16,10 18.5,10.2 21,11.2 L19.4,18.8 C16.8,17.9 14.4,17.9 11.8,19.2 Z" fill="url(#fr)"/>
  <path d="M21.8,11.6 C24.5,12.8 27.2,13 30.2,12 L28.6,19.6 C25.6,20.6 23,20.4 20.2,19.3 Z" fill="url(#fgn)"/>
  <path d="M11.6,20 C14.2,18.7 16.7,18.7 19.2,19.6 L17.6,27.4 C15,26.4 12.3,26.4 9.6,27.8 Z" fill="url(#fb)"/>
  <path d="M20,19.9 C22.8,21 25.4,21.2 28.4,20.3 L26.8,28 C23.8,29 21.2,28.8 18.4,27.7 Z" fill="url(#fy)"/>
</svg>
<svg style="left:58px;top:1045px" width="9" height="30"><g fill="#323c4a" opacity="0.85"><rect x="0" y="0" width="2" height="2"/><rect x="0" y="4" width="2" height="2"/><rect x="0" y="8" width="2" height="2"/><rect x="0" y="12" width="2" height="2"/><rect x="0" y="16" width="2" height="2"/><rect x="0" y="20" width="2" height="2"/><rect x="0" y="24" width="2" height="2"/><rect x="0" y="28" width="2" height="2"/><rect x="3" y="0" width="2" height="2"/><rect x="3" y="4" width="2" height="2"/><rect x="3" y="8" width="2" height="2"/><rect x="3" y="12" width="2" height="2"/><rect x="3" y="16" width="2" height="2"/><rect x="3" y="20" width="2" height="2"/><rect x="3" y="24" width="2" height="2"/><rect x="3" y="28" width="2" height="2"/><rect x="6" y="0" width="2" height="2"/><rect x="6" y="4" width="2" height="2"/><rect x="6" y="8" width="2" height="2"/><rect x="6" y="12" width="2" height="2"/><rect x="6" y="16" width="2" height="2"/><rect x="6" y="20" width="2" height="2"/><rect x="6" y="24" width="2" height="2"/><rect x="6" y="28" width="2" height="2"/></g></svg>
<div class="a" style="left:75px;top:1040px;width:60px;height:41px;border:1px solid #1e252e;border-radius:3px;box-shadow:inset 1px 1px 0 #f0f6fc,inset -1px 0 0 #d8e4f0;background:linear-gradient(150deg,#d6e0ea 0,#b4c4d6 45%,#a9bbd0 100%)"></div>
<svg style="left:90px;top:1045px" width="30" height="30">
  <path d="M15,15 L2.88,8 A14,14 0 0 1 27.12,8 Z" fill="#dc3d2e"/>
  <path d="M15,15 L27.12,8 A14,14 0 0 1 15,29 Z" fill="#fccd2a"/>
  <path d="M15,15 L15,29 A14,14 0 0 1 2.88,8 Z" fill="#2f9e44"/>
  <path d="M15,9 L27.12,8 L21,15 Z" fill="#dc3d2e"/>
  <path d="M20.2,18 L15,29 L12,19 Z" fill="#fccd2a"/>
  <path d="M9.8,18 L2.88,8 L11,11 Z" fill="#2f9e44"/>
  <circle cx="15" cy="15" r="6.6" fill="#fff"/>
  <circle cx="15" cy="15" r="5.1" fill="#4b87d6"/>
</svg>
<div class="a" style="left:137px;top:1040px;width:55px;height:41px;border:1px solid #1e252e;border-radius:3px;box-shadow:inset 1px 1px 0 #f8fbff,inset -1px 0 0 #e0eaf4;background:linear-gradient(150deg,#eef3f8 0,#d0dce8 50%,#c4d2e0 100%)"></div>
<svg style="left:146px;top:1045px" width="36" height="33">
  <defs><linearGradient id="fold" x1="0" y1="0" x2="0" y2="1"><stop offset="0" stop-color="#fff8d0"/><stop offset="1" stop-color="#f0cc6a"/></linearGradient>
  <linearGradient id="arch" x1="0" y1="0" x2="0" y2="1"><stop offset="0" stop-color="#c8f0ff"/><stop offset="0.5" stop-color="#6cc0ec"/><stop offset="1" stop-color="#3a98d8"/></linearGradient></defs>
  <path d="M2,26 L2,4 C2,3 2.5,2.5 3.5,2.5 L14.5,2.5 C15.5,2.5 16,3 16,4 L16,5 L33,5 L33,26 Z" fill="#f2d98e" stroke="#c49a48" stroke-width="0.8"/>
  <rect x="4.5" y="3.3" width="3" height="2" fill="#1ec81e"/><rect x="8" y="3.5" width="6" height="1.3" fill="#fff"/>
  <path d="M11,7 C11,6 11.5,5.5 12.5,5.5 L22.5,5.5 C23.5,5.5 24,6 24,7 L24,8 L33,8 L33,26 L11,26 Z" fill="#f2d98e" stroke="#c49a48" stroke-width="0.8"/>
  <rect x="13" y="6.3" width="2.6" height="2" fill="#d82a2a"/><rect x="16.5" y="6.6" width="6" height="1.3" fill="#fff"/>
  <path d="M19,9.5 C19,8.5 19.5,8 20.5,8 L33,8 C33.8,8 34,8.5 34,9.5 L34,26 L19,26 Z" fill="#f2d98e" stroke="#c49a48" stroke-width="0.8"/>
  <rect x="21" y="9" width="3" height="2" fill="#1a8ae8"/><rect x="25" y="9.3" width="7" height="1.3" fill="#fff"/>
  <path d="M1.5,11 L34,11 L34,26 L1.5,26 Z" fill="url(#fold)" stroke="#c49a48" stroke-width="0.8"/>
  <path d="M4.5,29.5 L4.5,23.5 C4.5,22 5.5,21 7,21 L26.5,21 C28,21 29,22 29,23.5 L29,29.5 C29,30.3 28.5,30.8 27.7,30.8 L24.3,30.8 C23.5,30.8 23,30.3 23,29.5 L23,26.5 L10.5,26.5 L10.5,29.5 C10.5,30.3 10,30.8 9.2,30.8 L5.8,30.8 C5,30.8 4.5,30.3 4.5,29.5 Z" fill="url(#arch)" stroke="#3a90d0" stroke-width="0.8"/>
  <path d="M8,17 L8,26 M4,22 L12,22 M5,19 L11,25" stroke="#fff" stroke-width="0.6" opacity="0.8"/>
</svg>
<div class="a" style="left:191px;top:1040px;width:6px;height:41px;border:1px solid #1e252e;border-left:none;border-radius:0 3px 3px 0;background:#d0dce8;box-shadow:inset 1px 0 0 #f0f6fc"></div>
<svg style="left:1725px;top:1045px" width="9" height="30"><g fill="#323c4a" opacity="0.85"><rect x="0" y="0" width="2" height="2"/><rect x="0" y="4" width="2" height="2"/><rect x="0" y="8" width="2" height="2"/><rect x="0" y="12" width="2" height="2"/><rect x="0" y="16" width="2" height="2"/><rect x="0" y="20" width="2" height="2"/><rect x="0" y="24" width="2" height="2"/><rect x="0" y="28" width="2" height="2"/><rect x="3" y="0" width="2" height="2"/><rect x="3" y="4" width="2" height="2"/><rect x="3" y="8" width="2" height="2"/><rect x="3" y="12" width="2" height="2"/><rect x="3" y="16" width="2" height="2"/><rect x="3" y="20" width="2" height="2"/><rect x="3" y="24" width="2" height="2"/><rect x="3" y="28" width="2" height="2"/><rect x="6" y="0" width="2" height="2"/><rect x="6" y="4" width="2" height="2"/><rect x="6" y="8" width="2" height="2"/><rect x="6" y="12" width="2" height="2"/><rect x="6" y="16" width="2" height="2"/><rect x="6" y="20" width="2" height="2"/><rect x="6" y="24" width="2" height="2"/><rect x="6" y="28" width="2" height="2"/></g></svg>
<div class="t" style="left:1743px;top:1052px;font-size:11px;color:#eef2f6">CS</div>
<svg style="left:1772px;top:1057px" width="10" height="6"><path d="M1,5.5 L5,1 L9,5.5 Z" fill="#f4f6f8" stroke="#8a9aaa" stroke-width="0.5"/></svg>
<svg style="left:1794px;top:1053px" width="18" height="16"><rect x="5.5" y="3.5" width="11" height="9" fill="#5a6a7a" stroke="#eee"/><path d="M8,14.5 L14,14.5" stroke="#eee" stroke-width="1.5"/><path d="M2,1 L2,15 M0.5,2 L3.5,2 L3.5,5 L0.5,5 Z" stroke="#eee" stroke-width="1" fill="none"/></svg>
<svg style="left:1818px;top:1053px" width="17" height="15"><path d="M1,5 L4,5 L8,1 L8,14 L4,10 L1,10 Z" fill="#f0f0f0" stroke="#6a7a8a" stroke-width="0.6"/><path d="M10.5,4.5 C12,6 12,9 10.5,10.5 M12.5,2.5 C15,5 15,10 12.5,12.5" stroke="#f0f0f0" stroke-width="1.2" fill="none"/></svg>
<div class="t" style="left:1859px;top:1048px;font-size:11px;color:#f2f5f8">16:12</div>
<div class="t" style="left:1849px;top:1064px;font-size:11px;color:#f2f5f8">27.1.2015</div>
<div class="a" style="left:1905px;top:1041px;width:15px;height:39px;border:1px solid #3a4654;background:linear-gradient(#7a8a9a,#5a6a7a);border-radius:2px"></div>
</body></html>
